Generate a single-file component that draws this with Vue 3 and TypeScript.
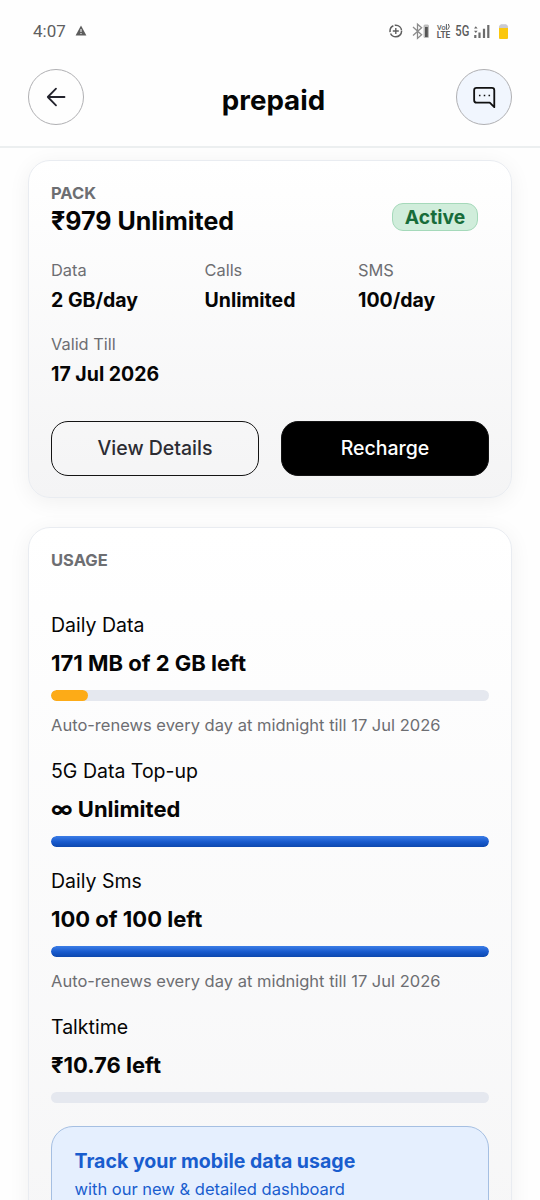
<script setup lang="ts">
interface PackField {
  label: string
  value: string
}

interface UsageItem {
  label: string
  value: string
  percent: number
  tone: 'amber' | 'blue'
  note?: string
}

const fields: PackField[] = [
  { label: 'Data', value: '2 GB/day' },
  { label: 'Calls', value: 'Unlimited' },
  { label: 'SMS', value: '100/day' },
  { label: 'Valid Till', value: '17 Jul 2026' },
]

const renewNote = 'Auto-renews every day at midnight till 17 Jul 2026'

const usage: UsageItem[] = [
  { label: 'Daily Data', value: '171 MB of 2 GB left', percent: 8.35, tone: 'amber', note: renewNote },
  { label: '5G Data Top-up', value: '∞ Unlimited', percent: 100, tone: 'blue' },
  { label: 'Daily Sms', value: '100 of 100 left', percent: 100, tone: 'blue', note: renewNote },
  { label: 'Talktime', value: '₹10.76 left', percent: 0, tone: 'blue' },
]
</script>

<template>
  <div class="screen">
    <div class="status">
      <span class="time">4:07</span>
      <svg class="warn" width="12" height="11" viewBox="0 0 12 11">
        <path d="M6 .6 11.400 10.400H.6Z" fill="#5c5c5c" />
        <path d="M6 4v3M6 8v1.100" stroke="#fff" stroke-width="1" />
      </svg>
      <svg class="tray" width="130" height="20" viewBox="0 0 130 20">
        <g fill="none" stroke="#5f5f5f">
          <circle cx="10.800" cy="10" r="5.800" stroke-width="1.500" stroke-dasharray="15.200 1.400 7.500 1.400 9.500 1.400" />
          <path d="M10.800 7v6M7.800 10h6" stroke-width="1.400" />
          <path d="M28 6l8.600 7.800-4.100 3.600V3.200l4.100 3.500-8.600 7.800" stroke="#8b8b8b" stroke-width="1.300" />
        </g>
        <rect x="38.500" y="3.500" width="5.500" height="13.500" rx="1.500" fill="#bdbdbd" />
        <rect x="40" y="6" width="2.800" height="10" fill="#555" />
        <g fill="#5c5c5c" font-family="Roboto, sans-serif">
          <text x="52" y="8.900" font-size="7.500" font-weight="500" textLength="8.600" lengthAdjust="spacingAndGlyphs">Vo</text>
          <text x="51.800" y="17.300" font-size="8.600" font-weight="700" textLength="13.500" lengthAdjust="spacingAndGlyphs">LTE</text>
          <text x="70.300" y="15" font-size="14.500" font-weight="500" textLength="14" lengthAdjust="spacingAndGlyphs">5G</text>
        </g>
        <path d="M61.400 3v5.900M63 3.600h.6M63.400 3q2.200 2.800-.8 5.700" stroke="#5c5c5c" fill="none" />
        <path d="M89 7.500l1.800-2.200L92.600 7.500ZM89 9.800h3.600l-1.800 2.200Z" fill="#666" />
        <path d="M90.300 14v3M94.500 11.400V17M99 7.800V17M103.300 4V17" stroke="#6c6c6c" stroke-width="2.200" />
        <path d="M115.500 3.200h6v2h-6Z" fill="#c9c9d2" />
        <rect x="114" y="4" width="9" height="14" rx="1.500" fill="#c9c9d2" />
        <path d="M114 7h9v9.500q0 1.500-1.500 1.500h-6Q114 18 114 16.500Z" fill="#fbc70d" />
      </svg>
    </div>

    <header class="header">
      <button class="round" aria-label="Back">
        <svg width="20" height="20" viewBox="0 0 20 20" fill="none" stroke="#23232d" stroke-width="1.800" stroke-linecap="round" stroke-linejoin="round">
          <path d="M18.500 10H1.800M10 1.700 1.800 10l8.200 8.300" />
        </svg>
      </button>
      <h1 class="title">prepaid</h1>
      <button class="round chat" aria-label="Chat">
        <svg width="23" height="23" viewBox="0 0 24 24" fill="none" stroke="#111" stroke-width="1.900" stroke-linejoin="round">
          <path d="M3.700 1.900h16q2.500 0 2.500 2.500v17.700l-4.700-4.700H3.700q-2.500 0-2.500-2.500V4.400q0-2.500 2.500-2.500Z" />
          <path d="M6.200 9.800h1.600M11.200 9.800h1.600M16.200 9.800h1.600" stroke-width="1.600" />
        </svg>
      </button>
    </header>

    <main class="body">
      <section class="card pack">
        <div class="pack-head">
          <div>
            <div class="eyebrow">PACK</div>
            <h2 class="pack-name">₹979 Unlimited</h2>
          </div>
          <span class="badge">Active</span>
        </div>
        <dl class="fields">
          <div v-for="f in fields" :key="f.label" class="field">
            <dt>{{ f.label }}</dt>
            <dd>{{ f.value }}</dd>
          </div>
        </dl>
        <div class="actions">
          <button class="btn outline">View Details</button>
          <button class="btn solid">Recharge</button>
        </div>
      </section>

      <section class="card usage">
        <div class="eyebrow">USAGE</div>
        <div class="usage-list">
          <div v-for="u in usage" :key="u.label" class="item">
            <div class="item-label">{{ u.label }}</div>
            <div class="item-value">{{ u.value }}</div>
            <div class="track">
              <div class="fill" :class="u.tone" :style="{ width: u.percent + '%' }"></div>
            </div>
            <div v-if="u.note" class="note">{{ u.note }}</div>
          </div>
        </div>
        <div class="banner">
          <div class="banner-title">Track your mobile data usage</div>
          <div class="banner-text">with our new &amp; detailed dashboard</div>
        </div>
      </section>
    </main>
  </div>
</template>

<style>
html,
body {
  background: #fff;
}
</style>

<style scoped>
.screen {
  box-sizing: border-box;
  width: 540px;
  height: 1200px;
  overflow: hidden;
  background: #fefefe;
  color: #050505;
  font-family: Inter, "Liberation Sans", sans-serif;
}
.screen * {
  box-sizing: border-box;
}
.status {
  display: flex;
  align-items: center;
  height: 48px;
  padding: 13px 25px 0 33px;
}
.time {
  width: 42px;
  font: 400 17px/20px Roboto, sans-serif;
  color: #5f5f5f;
}
.tray {
  margin-left: auto;
}
.header {
  display: flex;
  justify-content: space-between;
  align-items: flex-start;
  height: 100px;
  padding: 21px 27.600px 0;
  border-bottom: 2px solid #eceff0;
}
.round {
  display: flex;
  align-items: center;
  justify-content: center;
  width: 56px;
  height: 56px;
  padding: 0;
  border: 1px solid #b0b0b3;
  border-radius: 50%;
  background: #fefefe;
}
.chat {
  background: #f1f6fe;
}
.title {
  margin: 14px 0 0;
  padding-left: 7px;
  font-size: 27.700px;
  line-height: 34px;
  font-weight: 700;
}
.body {
  display: flex;
  flex-direction: column;
  gap: 29px;
  padding: 12px 28px 0;
}
.card {
  flex: none;
  border: 1.500px solid #e9ecf1;
  border-radius: 22px;
  padding: 0 22px;
  box-shadow: 0 4px 22px rgba(0, 0, 0, 0.06);
}
.pack {
  height: 338px;
  background: linear-gradient(#fff, #f4f4f5);
}
.usage {
  height: 800px;
  background: linear-gradient(#fff, #f5f5f6);
}
.pack-head {
  display: flex;
  justify-content: space-between;
  padding: 22px 11px 0 0;
}
.eyebrow {
  font-size: 16.500px;
  line-height: 20px;
  font-weight: 700;
  color: #6d6e72;
}
.pack-name {
  margin: 2.500px 0 0;
  font-size: 25px;
  line-height: 30px;
  font-weight: 700;
}
.badge {
  width: 86px;
  height: 28px;
  margin-top: 19.500px;
  border: 1px solid #a5d9ba;
  border-radius: 11px;
  background: #d0eddb;
  color: #176c3a;
  font-size: 19.300px;
  line-height: 27px;
  font-weight: 700;
  text-align: center;
}
.fields {
  display: grid;
  grid-template-columns: repeat(3, 153.500px);
  row-gap: 17.900px;
  margin: 22.500px 0 0;
}
.field dt {
  font-size: 16.400px;
  line-height: 24px;
  color: #6d6e72;
}
.field dd {
  margin: 3.500px 0 0;
  font-size: 19.500px;
  line-height: 29px;
  font-weight: 700;
}
.actions {
  display: flex;
  gap: 22px;
  margin-top: 31.800px;
}
.btn {
  flex: 1;
  height: 55px;
  border: 1.500px solid #141414;
  border-radius: 17px;
  padding: 0;
  font: 500 19.500px/24px Inter, "Liberation Sans", sans-serif;
}
.outline {
  background: transparent;
  color: #2c2c33;
}
.solid {
  background: #000;
  color: #fff;
}
.usage .eyebrow {
  margin-top: 22px;
}
.usage-list {
  display: flex;
  flex-direction: column;
  gap: 19.200px;
  margin-top: 40.100px;
}
.item-label {
  font-size: 19.500px;
  line-height: 30px;
}
.item-value {
  margin-top: 8px;
  font-size: 22px;
  line-height: 30px;
  font-weight: 700;
}
.track {
  height: 11.400px;
  margin-top: 11.500px;
  border-radius: 6px;
  background: #e5e8ef;
  overflow: hidden;
}
.fill {
  height: 100%;
  border-radius: 6px;
}
.amber {
  background: #fdab17;
}
.blue {
  background: linear-gradient(#3c7de6, #1759cc 55%, #0d48ae);
}
.note {
  margin-top: 12px;
  font-size: 16.500px;
  line-height: 24px;
  color: #6d6e72;
}
.banner {
  height: 110px;
  margin-top: 22.500px;
  padding: 21.500px 22.500px;
  border: 1.500px solid #a5bfe2;
  border-radius: 22px;
  background: #e5effe;
  color: #195dce;
}
.banner-title {
  font-size: 19.550px;
  line-height: 26px;
  font-weight: 700;
}
.banner-text {
  margin-top: 3px;
  font-size: 16.500px;
  line-height: 24px;
}
</style>
